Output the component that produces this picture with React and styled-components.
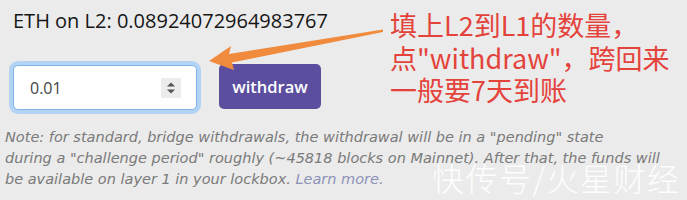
import React from "react";
import styled, { createGlobalStyle } from "styled-components";

const Global = createGlobalStyle`
  html, body { margin: 0; padding: 0; background: #ebebeb; }
  body { width: 687px; height: 200px; overflow: hidden; font-family: "Open Sans", "Noto Sans", sans-serif; }
`;

const Page = styled.div`
  position: relative;
  width: 687px;
  height: 200px;
  padding-left: 5px;
  box-sizing: border-box;
`;

const TopRow = styled.div`
  display: flex;
  align-items: flex-start;
`;

const LeftCol = styled.div`
  width: 385px;
  padding-left: 8px;
  box-sizing: border-box;
`;

const Title = styled.div`
  margin-top: 7px;
  font-family: "Open Sans", sans-serif;
  font-size: 20px;
  line-height: 28px;
  color: #161616;
  white-space: nowrap;
`;

const FormRow = styled.div`
  display: flex;
  align-items: center;
  gap: 22px;
  margin-top: 29px;
`;

const Field = styled.div`
  width: 184px;
  height: 45px;
  box-sizing: border-box;
  display: flex;
  align-items: center;
  justify-content: space-between;
  padding: 0 15px 0 16px;
  background: #fff;
  border: 1px solid #7fb4e8;
  border-radius: 5px;
  box-shadow: 0 0 0 4px #b2d3f3;
  margin-top: 1px;
`;

const FieldValue = styled.span`
  font-family: "Open Sans", sans-serif;
  font-size: 16px;
  color: #444;
`;

const Stepper = styled.span`
  width: 20px;
  height: 20px;
  background: #ececec;
  display: flex;
  align-items: center;
  justify-content: center;
`;

const Button = styled.button`
  width: 102px;
  height: 45px;
  border: none;
  border-radius: 5px;
  background: #5b4e9f;
  color: #fff;
  font-family: "Open Sans", sans-serif;
  font-weight: 600;
  font-size: 16.5px;
  padding: 0;
  margin-top: -1px;
`;

const Annotation = styled.div`
  margin-top: 9px;
  font-family: "Noto Sans CJK SC", sans-serif;
  font-size: 27px;
  line-height: 32.5px;
  color: #e4433c;
  white-space: nowrap;
`;

const Note = styled.p`
  margin: 17px 0 0 0;
  font-family: "DejaVu Sans", sans-serif;
  font-style: italic;
  font-size: 14.5px;
  line-height: 21px;
  color: #7a7a7a;
  white-space: nowrap;
`;

const LearnMore = styled.a`
  color: #8d92b8;
  text-decoration: none;
`;

const ArrowSvg = styled.svg`
  position: absolute;
  left: 0;
  top: 0;
  pointer-events: none;
`;

const Watermark = styled.div`
  position: absolute;
  left: 432px;
  top: 157px;
  font-family: "Noto Sans CJK SC", sans-serif;
  font-weight: 300;
  font-size: 32px;
  letter-spacing: 1.5px;
  line-height: 40px;
  color: rgba(255, 255, 255, 0.92);
  white-space: nowrap;
`;

export default function App() {
  return (
    <>
      <Global />
      <Page>
        <TopRow>
          <LeftCol>
            <Title>ETH on L2: 0.08924072964983767</Title>
            <FormRow>
              <Field>
                <FieldValue>0.01</FieldValue>
                <Stepper>
                  <svg width="10" height="14" viewBox="0 0 10 14">
                    <path d="M1 5.5 L5 1.5 L9 5.5 Z" fill="#555" />
                    <path d="M1 8.5 L5 12.5 L9 8.5 Z" fill="#555" />
                  </svg>
                </Stepper>
              </Field>
              <Button>withdraw</Button>
            </FormRow>
          </LeftCol>
          <Annotation>
            填上L2到L1的数量，
            <br />
            点"withdraw"，跨回来
            <br />
            一般要7天到账
          </Annotation>
        </TopRow>
        <Note>
          Note: for standard, bridge withdrawals, the withdrawal will be in a "pending" state
          <br />
          during a "challenge period" roughly (~45818 blocks on Mainnet). After that, the funds will
          <br />
          be available on layer 1 in your lockbox. <LearnMore>Learn more.</LearnMore>
        </Note>
        <ArrowSvg width="687" height="200" viewBox="0 0 687 200">
          <polygon
            points="209,61 231,46 229,54 383,29.5 383,32 232,62.5 234,70"
            fill="#f08a3c"
          />
        </ArrowSvg>
        <Watermark>快传号/火星财经</Watermark>
      </Page>
    </>
  );
}
